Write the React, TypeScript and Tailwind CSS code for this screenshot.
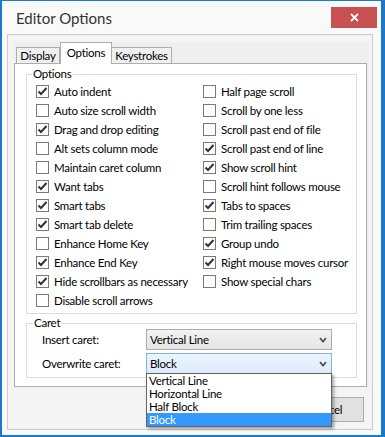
import React from 'react';

const leftOptions: [string, boolean][] = [
  ['Auto indent', true],
  ['Auto size scroll width', false],
  ['Drag and drop editing', true],
  ['Alt sets column mode', false],
  ['Maintain caret column', false],
  ['Want tabs', true],
  ['Smart tabs', true],
  ['Smart tab delete', true],
  ['Enhance Home Key', false],
  ['Enhance End Key', true],
  ['Hide scrollbars as necessary', true],
  ['Disable scroll arrows', false],
];

const rightOptions: [string, boolean][] = [
  ['Half page scroll', false],
  ['Scroll by one less', false],
  ['Scroll past end of file', false],
  ['Scroll past end of line', true],
  ['Show scroll hint', true],
  ['Scroll hint follows mouse', false],
  ['Tabs to spaces', true],
  ['Trim trailing spaces', false],
  ['Group undo', true],
  ['Right mouse moves cursor', true],
  ['Show special chars', false],
];

const caretShapes = ['Vertical Line', 'Horizontal Line', 'Half Block', 'Block'];

function CheckRow({ label, checked }: { label: string; checked: boolean }) {
  return (
    <div className="flex h-[19px] items-center">
      <span className="flex h-[13px] w-[13px] shrink-0 items-center justify-center border border-[#7a7a7a] bg-white">
        {checked && (
          <svg width="11" height="11" viewBox="0 0 11 11">
            <path d="M1.5 5.5 L4 8 L9.5 2" fill="none" stroke="#333" strokeWidth="2" />
          </svg>
        )}
      </span>
      <span className="ml-[5px] whitespace-nowrap">{label}</span>
    </div>
  );
}

function Chevron() {
  return (
    <svg width="8" height="6" viewBox="0 0 8 6" className="shrink-0">
      <path d="M1 1 L4 4.5 L7 1" fill="none" stroke="#505050" strokeWidth="1.8" />
    </svg>
  );
}

export default function App() {
  return (
    <div
      className="flex h-[437px] w-[385px] flex-col border-t border-b-2 border-l-2 border-r-4 border-[#1979ca] bg-[#f9f9f9] text-[11.5px] leading-[14px] tracking-[-0.25px] text-black"
      style={{ fontFamily: '"Lato", "Liberation Sans", sans-serif' }}
    >
      {/* Title bar */}
      <div className="flex h-[33px] shrink-0 items-start">
        <span className="mt-[9px] pl-[14px] text-[15px] leading-[17px] tracking-normal text-[#333]">
          Editor Options
        </span>
        <div className="ml-auto mr-[4px] mt-[6px] flex h-[21px] w-[46px] items-center justify-center bg-[#c75050]">
          <svg width="9" height="9" viewBox="0 0 9 9">
            <path d="M1 1 L8 8 M8 1 L1 8" stroke="#fff" strokeWidth="1.8" />
          </svg>
        </div>
      </div>

      {/* Client area */}
      <div className="ml-[5px] mr-[8px] flex h-[396px] flex-col border border-[#cccccc] bg-[#f4f4f4]">
        {/* Tab control */}
        <div className="ml-[6px] mr-[3px] mt-[7px] bg-[#efefef]">
          <div className="flex h-[21px] items-end pl-[2px]">
            <div className="flex h-[16px] w-[44px] items-center justify-center border border-b-0 border-[#adadad] bg-[#f0f0f0]">
              Display
            </div>
            <div className="relative z-10 -mb-px flex h-[22px] w-[52px] items-start justify-center border border-b-0 border-[#adadad] bg-white pt-[3px]">
              Options
            </div>
            <div className="-ml-px flex h-[16px] w-[61px] items-center justify-center border border-b-0 border-[#adadad] bg-[#f0f0f0]">
              Keystrokes
            </div>
          </div>

          {/* Tab page */}
          <div className="mr-[2px] flex flex-col border border-[#adadad] bg-white pb-[8px]">
            <fieldset className="ml-[11px] mr-[9px] mt-[3px] border border-[#dcdcdc] pb-[3px]">
              <legend className="ml-[5px] px-[1px] leading-[14px]">Options</legend>
              <div className="grid grid-cols-[167px_1fr] pl-[9px] pt-px">
                <div className="flex flex-col">
                  {leftOptions.map(([label, checked]) => (
                    <CheckRow key={label} label={label} checked={checked} />
                  ))}
                </div>
                <div className="flex flex-col">
                  {rightOptions.map(([label, checked]) => (
                    <CheckRow key={label} label={label} checked={checked} />
                  ))}
                </div>
              </div>
            </fieldset>

            <fieldset className="ml-[11px] mr-[9px] mt-[2px] border border-[#dcdcdc] pb-[3px]">
              <legend className="ml-[6px] px-[1px] leading-[14px]">Caret</legend>
              <div className="-mt-px flex flex-col gap-[3px] pl-[15px]">
                <div className="flex items-center">
                  <span className="w-[104px]">Insert caret:</span>
                  <div className="flex h-[21px] w-[186px] items-center justify-between border border-[#acacac] bg-gradient-to-b from-[#f2f2f2] to-[#e5e5e5] pl-[3px] pr-[4px]">
                    <span>Vertical Line</span>
                    <Chevron />
                  </div>
                </div>
                <div className="flex items-center">
                  <span className="w-[104px]">Overwrite caret:</span>
                  <div className="relative">
                    <div className="flex h-[21px] w-[186px] items-center justify-between border border-[#7eb4ea] bg-gradient-to-b from-[#ecf4fc] to-[#dcecfc] pl-[3px] pr-[4px]">
                      <span>Block</span>
                      <Chevron />
                    </div>
                    {/* Open dropdown list */}
                    <div className="absolute left-0 top-[20px] z-20 w-[186px] border border-[#646464] bg-white shadow-[2px_2px_3px_rgba(0,0,0,0.35)]">
                      {caretShapes.map((shape) => (
                        <div
                          key={shape}
                          className={`h-[13px] pl-[2px] leading-[13px] ${
                            shape === 'Block' ? 'bg-[#3399ff] text-white' : ''
                          }`}
                        >
                          {shape}
                        </div>
                      ))}
                    </div>
                  </div>
                </div>
              </div>
            </fieldset>
          </div>
        </div>

        {/* Dialog buttons (OK sits fully under the open list) */}
        <div className="mr-[8px] mt-[10px] flex justify-end">
          <button className="h-[25px] w-[80px] border border-[#adadad] bg-[#e1e1e1] pl-[4px]">Cancel</button>
        </div>
      </div>
    </div>
  );
}
